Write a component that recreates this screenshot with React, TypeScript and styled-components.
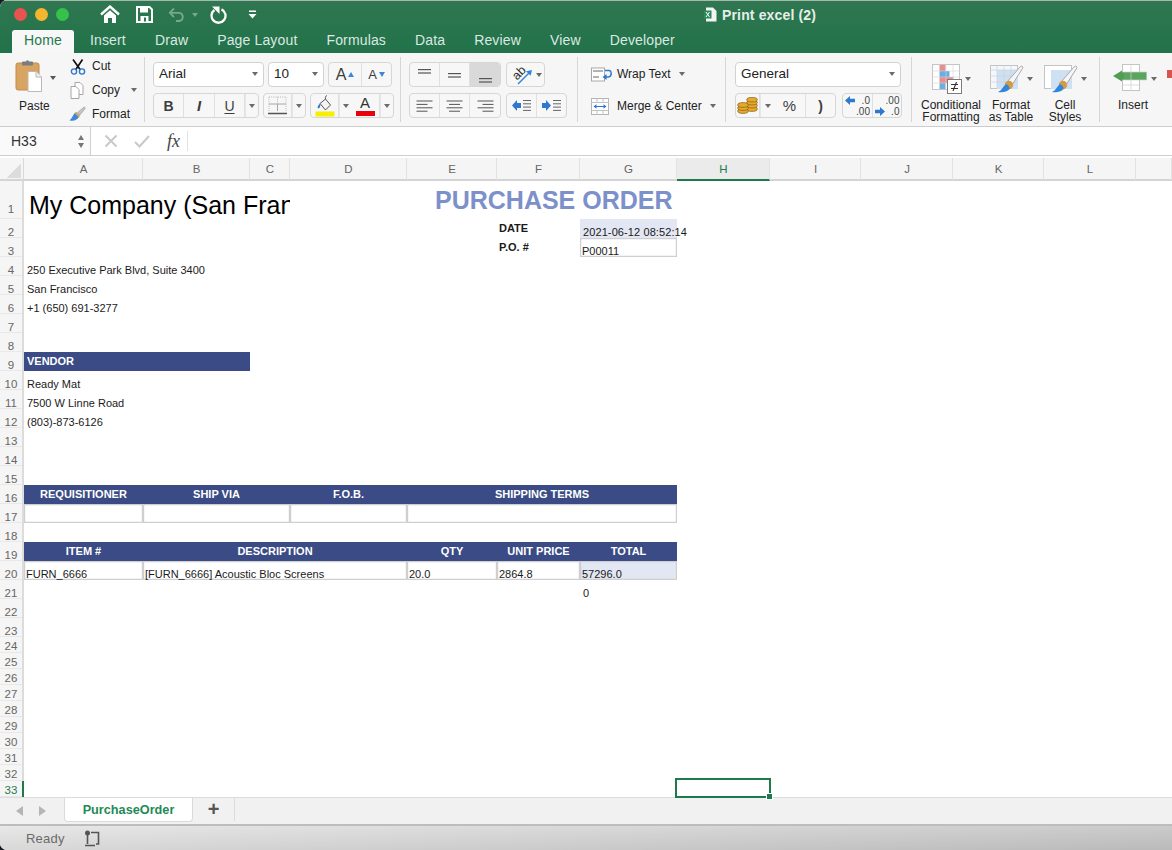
import React from "react";
import styled, { createGlobalStyle } from "styled-components";

const GlobalStyle = createGlobalStyle`
  html, body {
    margin: 0;
    width: 1172px;
    height: 850px;
    overflow: hidden;
    background: #141a22;
  }
  body {
    font-family: "Liberation Sans", Arial, sans-serif;
    color: #222;
  }
`;

const Window = styled.div`
  width: 1172px;
  height: 850px;
  display: flex;
  flex-direction: column;
  overflow: hidden;
  border-radius: 7px 0 0 7px;
  background: #fff;
`;

// TITLE
const Header = styled.header`
  height: 53px;
  flex: none;
  box-sizing: border-box;
  border-top: 1px solid #a9b8ae;
  background: linear-gradient(#2f7750, #21724a);
`;
const TitleRow = styled.div`
  height: 27px;
  display: flex;
  align-items: center;
  padding-left: 14px;
`;
const Light = styled.span<{ $color: string }>`
  width: 13px;
  height: 13px;
  margin-right: 8px;
  border-radius: 50%;
  background: ${(p) => p.$color};
`;
const Qat = styled.div`
  display: flex;
  align-items: center;
  margin-left: 23px;
`;
const QatSlot = styled.span<{ $gap: number }>`
  display: flex;
  margin-right: ${(p) => p.$gap}px;
`;
const Title = styled.div`
  display: flex;
  align-items: center;
  gap: 5px;
  margin-left: 447px;
  color: #e6eee9;
  font-size: 14px;
  font-weight: 700;
  letter-spacing: 0.15px;
`;
const TabRow = styled.nav`
  height: 25px;
  display: flex;
  align-items: flex-end;
  padding-left: 12px;
`;
const Tab = styled.div<{ $active?: boolean }>`
  height: 23px;
  box-sizing: border-box;
  display: flex;
  align-items: center;
  padding: 0 ${(p) => (p.$active ? 12 : 14.5)}px 4px;
  margin-right: ${(p) => (p.$active ? 1.5 : 0)}px;
  border-radius: 3px 3px 0 0;
  font-size: 14px;
  letter-spacing: 0.15px;
  color: ${(p) => (p.$active ? "#1f7a4d" : "#dce8e1")};
  background: ${(p) => (p.$active ? "#f7f7f7" : "transparent")};
`;

// RIBBON
const Ribbon = styled.section`
  height: 74px;
  flex: none;
  box-sizing: border-box;
  display: flex;
  overflow: hidden;
  background: #f6f6f6;
  border-bottom: 1px solid #cdcdcd;
`;
const Group = styled.div<{ $w: number; $pad?: number; $last?: boolean }>`
  width: ${(p) => p.$w}px;
  flex: none;
  box-sizing: border-box;
  padding: 9px 0 0 ${(p) => p.$pad ?? 8}px;
  position: relative;
  &::after {
    content: "";
    display: ${(p) => (p.$last ? "none" : "block")};
    position: absolute;
    right: 0;
    top: 4px;
    bottom: 4px;
    width: 1px;
    background: #d6d6d6;
  }
`;
const Stack = styled.div`
  display: flex;
  flex-direction: column;
  gap: 6px;
`;
const Row = styled.div<{ $gap?: number }>`
  display: flex;
  gap: ${(p) => p.$gap ?? 5}px;
`;
const Select = styled.div<{ $w: number }>`
  width: ${(p) => p.$w}px;
  height: 25px;
  box-sizing: border-box;
  display: flex;
  align-items: center;
  justify-content: space-between;
  padding: 0 5px 2px 5px;
  background: #fff;
  border: 1px solid #d2d2d2;
  border-radius: 4px;
  font-size: 13.5px;
`;
const ButtonGroup = styled.div`
  height: 25px;
  box-sizing: border-box;
  display: flex;
  border: 1px solid #d6d6d6;
  border-radius: 4px;
  background: #f7f7f7;
  overflow: hidden;
`;
const GroupButton = styled.div<{ $w: number; $active?: boolean }>`
  width: ${(p) => p.$w}px;
  flex: none;
  display: flex;
  align-items: center;
  justify-content: center;
  gap: 2px;
  box-sizing: border-box;
  border-right: 1px solid #e0e0e0;
  background: ${(p) => (p.$active ? "#d9d9d9" : "transparent")};
  &:last-child {
    border-right: none;
  }
`;
const Glyph = styled.span<{ $size?: number; $weight?: number; $italic?: boolean }>`
  font-size: ${(p) => p.$size ?? 14}px;
  font-weight: ${(p) => p.$weight ?? 400};
  font-style: ${(p) => (p.$italic ? "italic" : "normal")};
  color: #3d3d3d;
  line-height: 1;
`;
const Underlined = styled(Glyph)`
  text-decoration: underline;
  text-underline-offset: 2px;
`;
const ColorLetter = styled.span<{ $color: string }>`
  display: flex;
  flex-direction: column;
  align-items: center;
  font-size: 15px;
  line-height: 14px;
  color: #333;
  &::after {
    content: "";
    width: 19px;
    height: 5px;
    margin-top: 1px;
    background: ${(p) => p.$color};
  }
`;
const Caret = styled.i<{ $dark?: boolean; $tint?: string }>`
  display: inline-block;
  flex: none;
  width: 0;
  height: 0;
  border-left: 3px solid transparent;
  border-right: 3px solid transparent;
  border-top: 4px solid ${(p) => p.$tint ?? (p.$dark ? "#555" : "#6b6b6b")};
`;
const CopyCaret = styled(Caret)`
  margin-left: 5px;
`;
const CaretCell = styled.div<{ $w: number }>`
  width: ${(p) => p.$w}px;
  flex: none;
  display: flex;
  align-items: center;
  justify-content: center;
  border-left: 1px solid #e6e6e6;
`;
const ClipLayout = styled.div`
  display: flex;
  margin-top: -9px;
`;
const PasteButton = styled.div`
  width: 60px;
  flex: none;
  height: 73px;
  position: relative;
  padding: 7px 0 0 15px;
  box-sizing: border-box;
`;
const PasteLabel = styled.span`
  position: absolute;
  left: 19px;
  top: 46px;
  font-size: 12px;
`;
const PasteCaret = styled(Caret)`
  position: absolute;
  left: 50px;
  top: 23px;
`;
const ClipColumn = styled.div`
  display: flex;
  flex-direction: column;
  padding-top: 1px;
  margin-left: 9px;
`;
const ClipRow = styled.div`
  height: 24px;
  display: flex;
  align-items: center;
  gap: 6px;
  font-size: 12px;
`;
const ClipIcon = styled.span`
  width: 17px;
  display: flex;
  justify-content: center;
`;
const WrapColumn = styled.div`
  display: flex;
  flex-direction: column;
  gap: 10px;
  margin-top: 1px;
`;
const WrapRow = styled.div`
  height: 22px;
  display: flex;
  align-items: center;
  font-size: 12px;
`;
const WrapIcon = styled.span`
  width: 26px;
  flex: none;
  display: flex;
`;
const WrapCaret = styled(Caret)`
  margin-left: 8px;
`;
const LargeRow = styled.div`
  display: flex;
  margin-top: -9px;
`;
const LargeButton = styled.div<{ $w: number }>`
  width: ${(p) => p.$w}px;
  flex: none;
  height: 73px;
  box-sizing: border-box;
  padding-top: 10px;
  display: flex;
  flex-direction: column;
  align-items: center;
`;
const LargeIcon = styled.div`
  height: 32px;
  display: flex;
  align-items: center;
  gap: 3px;
  margin-left: 1px;
`;
const LargeLabel = styled.div`
  margin-top: 4px;
  text-align: center;
  font-size: 12px;
  line-height: 12px;
  white-space: nowrap;
`;
const DecimalCell = styled.div`
  display: grid;
  grid-template-columns: auto auto;
  align-items: center;
  column-gap: 1px;
  font-size: 10px;
  line-height: 11px;
  color: #444;
  justify-items: end;
`;
const RedStub = styled.span`
  position: absolute;
  left: 67px;
  top: 17px;
  width: 6px;
  height: 8px;
  background: #d9534f;
`;

// FORMULA BAR
const FormulaBar = styled.section`
  height: 29px;
  flex: none;
  box-sizing: border-box;
  display: flex;
  align-items: center;
  background: #fff;
  border-bottom: 1px solid #cfcfcf;
`;
const NameBox = styled.div`
  width: 91px;
  height: 28px;
  box-sizing: border-box;
  display: flex;
  align-items: center;
  justify-content: space-between;
  padding: 0 6px 0 11px;
  font-size: 14px;
  color: #333;
  background: #fafafa;
  border-right: 1px solid #cfcfcf;
`;
const Spinner = styled.div`
  display: flex;
  flex-direction: column;
  gap: 3px;
`;
const SpinUp = styled.i<{ $tint?: string }>`
  width: 0;
  height: 0;
  border-left: 3.5px solid transparent;
  border-right: 3.5px solid transparent;
  border-bottom: 5px solid ${(p) => p.$tint ?? "#777"};
`;
const SpinDown = styled.i<{ $tint?: string }>`
  width: 0;
  height: 0;
  border-left: 3.5px solid transparent;
  border-right: 3.5px solid transparent;
  border-top: 5px solid ${(p) => p.$tint ?? "#777"};
`;
const FormulaTools = styled.div`
  display: flex;
  align-items: center;
  gap: 16px;
  margin-left: 13px;
`;
const Fx = styled.span`
  padding: 0 7px 0 1px;
  font-family: "Liberation Serif", serif;
  font-style: italic;
  font-size: 18px;
  line-height: 20px;
  color: #444;
  border-right: 1px solid #e2e2e2;
`;

// SHEET
const Sheet = styled.main`
  flex: none;
  margin-top: 2px;
  display: grid;
  grid-template-columns: 24px 119px 107px 40px 117px 90px 83px 97px 93px 91px 92px 91px 92px 36px;
  grid-template-rows: 23px 38px repeat(22, 19px) repeat(10, 16px);
  background: #fff;
  font-size: 11px;
  color: #1a1a1a;
  position: relative;
  height: 639px;
`;
const Corner = styled.div`
  grid-column: 1;
  grid-row: 1;
  background: #f5f5f5;
  border-right: 1px solid #d8d8d8;
  border-bottom: 2px solid #d4d4d4;
  &::after {
    content: "";
    display: block;
    width: 15px;
    height: 15px;
    margin: 5px 0 0 6px;
    background: linear-gradient(135deg, transparent 50%, #dcdcdc 50%);
  }
`;
const ColHead = styled.div<{ $col: number; $active?: boolean }>`
  grid-column: ${(p) => p.$col};
  grid-row: 1;
  display: flex;
  align-items: center;
  justify-content: center;
  padding-left: 1px;
  font-size: 11.5px;
  color: ${(p) => (p.$active ? "#1d7a4c" : "#666")};
  background: ${(p) => (p.$active ? "#ebebeb" : "#f5f5f5")};
  border-right: 1px solid #e2e2e2;
  border-bottom: 2px solid ${(p) => (p.$active ? "#1d7a4c" : "#d4d4d4")};
`;
const RowHead = styled.div<{ $row: number; $active?: boolean }>`
  grid-column: 1;
  grid-row: ${(p) => p.$row + 1};
  display: flex;
  align-items: flex-end;
  justify-content: center;
  padding-bottom: ${(p) => (p.$row === 1 ? 4 : p.$row > 23 ? 1 : 0)}px;
  line-height: 11px;
  font-size: 11.5px;
  color: ${(p) => (p.$active ? "#1d7a4c" : "#666")};
  background: #f5f5f5;
  box-sizing: border-box;
  border-right: ${(p) => (p.$active ? "2px solid #1d7a4c" : "2px solid #dcdcdc")};
  box-shadow: inset 0 -1px 0 #e8e8e8;
`;
const Cell = styled.div<{
  $col: number;
  $row: number;
  $span?: number;
  $fill?: string;
  $border?: boolean;
  $align?: "left" | "center";
  $mid?: boolean;
  $bold?: boolean;
  $light?: boolean;
  $pad?: number;
  $clip?: boolean;
}>`
  grid-column: ${(p) => p.$col} / span ${(p) => p.$span ?? 1};
  grid-row: ${(p) => p.$row + 1};
  box-sizing: border-box;
  display: flex;
  align-items: ${(p) => (p.$mid ? "center" : "flex-end")};
  justify-content: ${(p) => (p.$align === "center" ? "center" : "flex-start")};
  padding-left: ${(p) => p.$pad ?? 2}px;
  padding-bottom: ${(p) => (p.$mid ? 2 : 0)}px;
  white-space: nowrap;
  min-width: 0;
  line-height: 12px;
  overflow: ${(p) => (p.$clip ? "hidden" : "visible")};
  font-weight: ${(p) => (p.$bold ? 700 : 400)};
  color: ${(p) => (p.$light ? "#fff" : "#1a1a1a")};
  background: ${(p) => p.$fill ?? "transparent"};
  box-shadow: ${(p) => (p.$border ? "inset 0 0 0 1.2px #cfcfcf" : "none")};
`;
const CompanyName = styled.span`
  font-size: 25px;
  line-height: 30px;
  color: #000;
  margin: 0 0 -1px 5px;
`;
const DocTitle = styled.span`
  font-size: 25px;
  line-height: 30px;
  font-weight: 700;
  color: #7c90c9;
  margin: 0 0 4px 0;
`;
const DateText = styled.span`
  letter-spacing: 0.1px;
`;
const Selection = styled.div`
  grid-column: 9;
  grid-row: 34;
  position: relative;
  &::before {
    content: "";
    position: absolute;
    left: -2px;
    right: -1px;
    top: -3px;
    bottom: -1px;
    border: 2px solid #1d7a4c;
  }
  &::after {
    content: "";
    position: absolute;
    right: -3px;
    bottom: -3px;
    width: 5px;
    height: 5px;
    background: #1d7a4c;
    border: 1px solid #fff;
  }
`;

// BOTTOM
const SheetBar = styled.div`
  height: 29px;
  flex: none;
  box-sizing: border-box;
  display: flex;
  background: #f1f1f1;
  border-top: 1px solid #dcdcdc;
  border-bottom: 2px solid #bdbdbd;
`;
const SheetNav = styled.div`
  width: 64px;
  display: flex;
  align-items: center;
  justify-content: center;
  gap: 16px;
  padding-right: 3px;
  box-sizing: border-box;
`;
const NavArrow = styled.i<{ $right?: boolean }>`
  width: 0;
  height: 0;
  border-top: 5px solid transparent;
  border-bottom: 5px solid transparent;
  border-${(p) => (p.$right ? "left" : "right")}: 7px solid #b5b5b5;
`;
const SheetTab = styled.div`
  width: 129px;
  height: 24px;
  box-sizing: border-box;
  display: flex;
  align-items: center;
  justify-content: center;
  background: #fff;
  border: 1px solid #dadada;
  border-top: none;
  border-radius: 0 0 4px 4px;
  color: #1f8a55;
  font-size: 12.7px;
  font-weight: 700;
`;
const AddSheet = styled.div`
  width: 41px;
  height: 23px;
  display: flex;
  align-items: center;
  justify-content: center;
  font-size: 20px;
  font-weight: 700;
  color: #555;
  border-right: 1px solid #dcdcdc;
`;
const StatusBar = styled.footer`
  flex: 1;
  display: flex;
  align-items: center;
  gap: 19px;
  padding-left: 26px;
  font-size: 13px;
  letter-spacing: 0.2px;
  color: #6a6a6a;
  background: linear-gradient(rgba(255, 255, 255, 0.12), rgba(0, 0, 0, 0.05)),
    linear-gradient(90deg, #e4e4e4, #c4c4c4);
`;

// ICONS
const HomeIcon = () => (
  <svg width="20" height="19" viewBox="0 0 20 19">
    <path d="M1 9.5 10 1.5l9 8" fill="none" stroke="#fff" strokeWidth="2.4" />
    <path d="M4 10.5 10 5.2l6 5.3V18h-4v-5H8v5H4z" fill="#fff" />
  </svg>
);
const Save = () => (
  <svg width="17" height="17" viewBox="0 0 17 17">
    <path d="M1 1h12.5L16 3.5V16H1z" fill="none" stroke="#fff" strokeWidth="2" />
    <rect x="4" y="2" width="8" height="4.5" fill="#fff" />
    <rect x="4.5" y="10" width="8" height="6" fill="#fff" />
    <rect x="8" y="11.5" width="2" height="4" fill="#2c7750" />
  </svg>
);
const Undo = () => (
  <svg width="18" height="15" viewBox="0 0 18 15">
    <path d="M6 1.5 1.8 5.8 6 10" fill="none" stroke="#79a78e" strokeWidth="1.8" />
    <path d="M2 5.8h9.5a4.2 4.2 0 0 1 0 8.2H8" fill="none" stroke="#79a78e" strokeWidth="1.8" />
  </svg>
);
const Redo = () => (
  <svg width="18" height="18" viewBox="0 0 18 18">
    <path d="M11.5 3.4a7 7 0 1 1-7 .6" fill="none" stroke="#fff" strokeWidth="2.3" />
    <path d="M2 .5h7.5V8z" fill="#fff" />
  </svg>
);
const Customize = () => (
  <svg width="9" height="9" viewBox="0 0 9 9">
    <rect x="1" y="0.5" width="7" height="1.5" fill="#fff" />
    <path d="M0.5 4h8L4.5 8.5z" fill="#fff" />
  </svg>
);
const ExcelDoc = () => (
  <svg width="13" height="15" viewBox="0 0 13 15">
    <path d="M2 .5h7l3.5 3.5v10.5H2z" fill="#f3f5f3" />
    <rect x="0" y="3.5" width="7.5" height="8" fill="#2a8a58" />
    <path d="m2 5 3.5 5M5.5 5 2 10" stroke="#fff" strokeWidth="1" />
  </svg>
);
const PasteIcon = () => (
  <svg width="28" height="32" viewBox="0 0 28 32">
    <rect x="1" y="3" width="23" height="27" rx="2" fill="#d9a362" stroke="#c28b4c" />
    <rect x="7" y="1.5" width="11" height="4" rx="1" fill="#7c7c7c" />
    <circle cx="12.5" cy="1.8" r="1.6" fill="#7c7c7c" />
    <path d="M13 11.5h8l5.5 5.5v14.5H13z" fill="#fff" stroke="#b9b9b9" />
    <path d="M21 11.5V17h5.5" fill="#eee" stroke="#b9b9b9" />
  </svg>
);
const Scissors = () => (
  <svg width="16" height="17" viewBox="0 0 16 17">
    <path d="M3 1.5 10.5 12M12.5 1.5 5.5 12" stroke="#111" strokeWidth="1.7" fill="none" />
    <circle cx="4" cy="13.5" r="2.6" fill="none" stroke="#2f78c8" strokeWidth="1.4" />
    <circle cx="12" cy="13.5" r="2.6" fill="none" stroke="#2f78c8" strokeWidth="1.4" />
  </svg>
);
const CopyIcon = () => (
  <svg width="15" height="17" viewBox="0 0 15 17">
    <path d="M5 .5h5l3 3v9H5z" fill="#fff" stroke="#a6a6a6" />
    <path d="M1 4.5h5l3 3v9H1z" fill="#fff" stroke="#a6a6a6" />
  </svg>
);
const Painter = () => (
  <svg width="18" height="17" viewBox="0 0 18 17">
    <path d="M9 6.5 15.5 1c1.2-.6 2 .3 1.5 1.3L11.5 9z" fill="#c7c7c7" stroke="#8c8c8c" strokeWidth=".6" />
    <path d="M7.5 5.5 12 10l-1.5 1.5L6 7z" fill="#d0a060" />
    <path d="M6 7l4.5 4.5C8 15 4 16 .5 14.5 3 13.5 3.5 10 6 7z" fill="#3f87d6" />
  </svg>
);
const BordersIcon = () => (
  <svg width="19" height="19" viewBox="0 0 19 19">
    <path d="M1 1h17M1 1v14M18 1v14M9.5 1v14" stroke="#b7b7b7" strokeWidth="1" strokeDasharray="1 1.2" fill="none" />
    <path d="M1 8h17" stroke="#a8a8a8" strokeWidth="1" />
    <path d="M9.5 8v7" stroke="#a8a8a8" strokeWidth="1" />
    <path d="M0 17.5h19" stroke="#555" strokeWidth="1.4" />
  </svg>
);
const FillIcon = () => (
  <svg width="20" height="22" viewBox="0 0 20 22">
    <path d="M5 8.5 10.5 4l5 6-5 5z" fill="#f4f4f4" stroke="#555" strokeWidth="1" />
    <path d="M10.5 4c-.5-2 .3-3.4 1.5-3.3" fill="none" stroke="#555" />
    <path d="M5 8.5c-2 2-3 3.5-2 5 1 0 2.2-1 2.3-3z" fill="#2f78c8" />
    <rect x="0.5" y="16.5" width="19" height="5" fill="#f6f000" />
  </svg>
);
const Lines = ({ kind }: { kind: "left" | "center" | "right" }) => {
  const spans = [16, 11, 16, 11];
  return (
    <svg width="17" height="12" viewBox="0 0 17 12">
      {spans.map((w, i) => {
        const x = kind === "left" ? 0.5 : kind === "right" ? 16.5 - w : 8.5 - w / 2;
        return <rect key={i} x={x} y={0.5 + i * 3.4} width={w} height="1" fill="#555" />;
      })}
    </svg>
  );
};
const Valign = ({ y }: { y: number }) => (
  <svg width="17" height="20" viewBox="0 0 17 20">
    <rect x="2" y={y} width="13" height="1.2" fill="#555" />
    <rect x="2" y={y + 3.4} width="13" height="1.2" fill="#555" />
  </svg>
);
const Orientation = () => (
  <svg width="24" height="22" viewBox="0 0 24 22">
    <path d="M8 20 19 9" stroke="#2f86dd" strokeWidth="1.4" />
    <path d="M22 6l-6 1.2 4.6 4.6z" fill="#2f86dd" />
    <g transform="rotate(-45 9 9)">
      <text x="2" y="13" fontSize="12.5" fontFamily="Liberation Sans" fill="#333">ab</text>
    </g>
  </svg>
);
const Indent = ({ flip }: { flip?: boolean }) => (
  <svg width="20" height="13" viewBox="0 0 20 13">
    <path d={flip ? "M0 4h4V1l5 5.5L4 12V9H0z" : "M9 4H5V1L0 6.5 5 12V9h4z"} fill="#2f78d0" />
    <path d="M11 1.5h8M11 4.8h8M11 8.1h8M11 11.4h8" stroke="#666" strokeWidth="1" />
  </svg>
);
const WrapIconSvg = () => (
  <svg width="22" height="15" viewBox="0 0 22 15">
    <rect x="0.5" y="1" width="13" height="13" fill="#fff" stroke="#a8a8a8" />
    <path d="M2 4h10M2 10h6" stroke="#666" />
    <path d="M14 3.5h4c3 0 3 6-.5 6.5H13" fill="none" stroke="#2f78d0" strokeWidth="1.5" />
    <path d="M15.5 7v6l-4-3z" fill="#2f78d0" />
  </svg>
);
const MergeIcon = () => (
  <svg width="18" height="17" viewBox="0 0 18 17">
    <rect x="0.5" y="0.5" width="17" height="16" fill="#fff" stroke="#b5b5b5" />
    <path d="M0 4.5h18M0 12.5h18M6 0v4M12 0v4M6 13v4M12 13v4" stroke="#c2c2c2" />
    <path d="M3 8.5h12" stroke="#2f78d0" />
    <path d="M5.5 6.3v4.4L2.5 8.5zM12.5 6.3v4.4l3-2.2z" fill="#2f78d0" />
  </svg>
);
const Coins = () => (
  <svg width="21" height="17" viewBox="0 0 21 17">
    <g fill="#e5a92f" stroke="#8a6212" strokeWidth=".7">
      <ellipse cx="15" cy="12" rx="5.3" ry="2.4" />
      <ellipse cx="15" cy="8.5" rx="5.3" ry="2.4" />
      <ellipse cx="15" cy="5.5" rx="5.3" ry="2.4" />
      <ellipse cx="15" cy="2.7" rx="5.3" ry="2.3" />
      <ellipse cx="6" cy="14" rx="5.3" ry="2.4" />
      <ellipse cx="6" cy="11" rx="5.3" ry="2.4" />
      <ellipse cx="6" cy="8" rx="5.3" ry="2.4" />
    </g>
  </svg>
);
const DecimalArrow = ({ flip }: { flip?: boolean }) => (
  <svg width="10" height="9" viewBox="0 0 9 8">
    <path d={flip ? "M0 2.5h4.5V0L9 4 4.5 8V5.5H0z" : "M9 2.5H4.5V0L0 4l4.5 4V5.5H9z"} fill="#2f78d0" />
  </svg>
);
const ConditionalIcon = () => (
  <svg width="30" height="30" viewBox="0 0 30 30">
    <rect x="0.5" y="0.5" width="27" height="25" fill="#fff" stroke="#c4c4c4" />
    <rect x="7.5" y="1" width="6" height="6" fill="#e78f8f" />
    <rect x="7.5" y="7" width="10" height="6" fill="#6aaee6" />
    <rect x="7.5" y="13" width="14" height="6" fill="#e78f8f" />
    <rect x="7.5" y="19" width="6" height="6" fill="#6aaee6" />
    <path d="M7.5 0v26M14 0v26M21 0v26M0 7h28M0 13h28M0 19h28" stroke="#d4d4d4" strokeWidth=".6" />
    <rect x="15.5" y="15.5" width="14" height="14" fill="#fff" stroke="#7c7c7c" />
    <path d="M19 20.5h7M19 24.5h7M24.5 18l-3.5 9" stroke="#333" strokeWidth="1.1" />
  </svg>
);
const BrushTable = ({ lines }: { lines?: boolean }) => (
  <svg width="34" height="30" viewBox="0 0 34 30">
    <rect x="0.5" y="1.5" width="27" height="23" fill={lines ? "#f4f7fb" : "#fff"} stroke="#c4c4c4" />
    <rect x="7" y="6" width="21" height="19" fill="#cfe0f3" />
    {lines && <path d="M7 1v24M14 1v24M21 1v24M0 6h28M0 12h28M0 18h28" stroke="#c9d3dd" strokeWidth=".7" />}
    <path d="M17 18 30.5 2.5c1.4-1 3 .2 2.2 1.7L22 21z" fill="#f6f6f6" stroke="#a8a8a8" />
    <circle cx="19" cy="21" r="4.2" fill="#d39b45" />
    <path d="M16 20c3 1.5 4 4 3.5 5-2.5 3-7 3.8-11.5 3 4-1.5 4.5-5 8-8z" fill="#2f86dd" />
  </svg>
);
const InsertIcon = () => (
  <svg width="38" height="30" viewBox="0 0 38 30">
    <rect x="12.5" y="0.5" width="17" height="26" fill="#fff" stroke="#c4c4c4" />
    <rect x="12" y="8" width="25" height="8" fill="#5aa65e" />
    <path d="M12.5 8h24v8h-24M21 0v27M12.5 21h17" fill="none" stroke="#cfcfcf" strokeWidth=".7" />
    <path d="M12 6.5v11L3 12l9-5.5z" fill="#4f9e54" />
    <rect x="9" y="9.5" width="5" height="5" fill="#4f9e54" />
  </svg>
);
const Cross = () => (
  <svg width="14" height="14" viewBox="0 0 14 14">
    <path d="M1.5 1.5 12.5 12.5M12.5 1.5 1.5 12.5" stroke="#c9c9c9" strokeWidth="2" />
  </svg>
);
const Check = () => (
  <svg width="16" height="13" viewBox="0 0 16 13">
    <path d="M1 7l4.5 4.5L15 1" fill="none" stroke="#c9c9c9" strokeWidth="2" />
  </svg>
);
const MacroIcon = () => (
  <svg width="17" height="17" viewBox="0 0 17 17">
    <circle cx="3.5" cy="3" r="2.5" fill="#555" />
    <path d="M3.5 5v9M7 2.5h7.5V14H12M1 15.5h10" fill="none" stroke="#555" strokeWidth="1.6" />
  </svg>
);

// DATA
const columns = ["A", "B", "C", "D", "E", "F", "G", "H", "I", "J", "K", "L", ""];
const rowNumbers = Array.from({ length: 33 }, (_, i) => i + 1);
const tabs = ["Insert", "Draw", "Page Layout", "Formulas", "Data", "Review", "View", "Developer"];
const plainCells: [number, string][] = [
  [4, "250 Executive Park Blvd, Suite 3400"],
  [5, "San Francisco"],
  [6, "+1 (650) 691-3277"],
  [10, "Ready Mat"],
  [11, "7500 W Linne Road"],
  [12, "(803)-873-6126"],
];
const band = "#3a4b85";
const pale = "#e3e7f3";

export default function App() {
  return (
    <Window>
      <GlobalStyle />
      <Header>
        <TitleRow>
          <Light $color="#e9534f" />
          <Light $color="#f5b62f" />
          <Light $color="#35c24a" />
          <Qat>
            <QatSlot $gap={16}><HomeIcon /></QatSlot>
            <QatSlot $gap={15}><Save /></QatSlot>
            <QatSlot $gap={6}><Undo /></QatSlot>
            <QatSlot $gap={12}><Caret $tint="#79a78e" /></QatSlot>
            <QatSlot $gap={20}><Redo /></QatSlot>
            <QatSlot $gap={0}><Customize /></QatSlot>
          </Qat>
          <Title>
            <ExcelDoc />
            Print excel (2)
          </Title>
        </TitleRow>
        <TabRow>
          <Tab $active>Home</Tab>
          {tabs.map((t) => (
            <Tab key={t}>{t}</Tab>
          ))}
        </TabRow>
      </Header>

      <Ribbon>
        <Group $w={145} $pad={0}>
          <ClipLayout>
            <PasteButton>
              <PasteIcon />
              <PasteCaret $dark />
              <PasteLabel>Paste</PasteLabel>
            </PasteButton>
            <ClipColumn>
              <ClipRow>
                <ClipIcon><Scissors /></ClipIcon>
                Cut
              </ClipRow>
              <ClipRow>
                <ClipIcon><CopyIcon /></ClipIcon>
                Copy
                <CopyCaret />
              </ClipRow>
              <ClipRow>
                <ClipIcon><Painter /></ClipIcon>
                Format
              </ClipRow>
            </ClipColumn>
          </ClipLayout>
        </Group>

        <Group $w={256}>
          <Stack>
            <Row $gap={4}>
              <Select $w={111}>
                Arial
                <Caret />
              </Select>
              <Select $w={56}>
                10
                <Caret />
              </Select>
              <ButtonGroup>
                <GroupButton $w={33}>
                  <Glyph $size={16}>A</Glyph>
                  <SpinUp $tint="#3d86d8" />
                </GroupButton>
                <GroupButton $w={29}>
                  <Glyph $size={13}>A</Glyph>
                  <SpinDown $tint="#3d86d8" />
                </GroupButton>
              </ButtonGroup>
            </Row>
            <Row $gap={4}>
              <ButtonGroup>
                <GroupButton $w={30}><Glyph $weight={700}>B</Glyph></GroupButton>
                <GroupButton $w={31}><Glyph $italic $weight={700} $size={15}>I</Glyph></GroupButton>
                <GroupButton $w={30}><Underlined>U</Underlined></GroupButton>
                <CaretCell $w={12}><Caret /></CaretCell>
              </ButtonGroup>
              <ButtonGroup>
                <GroupButton $w={28}><BordersIcon /></GroupButton>
                <CaretCell $w={12}><Caret /></CaretCell>
              </ButtonGroup>
              <ButtonGroup>
                <GroupButton $w={28}><FillIcon /></GroupButton>
                <CaretCell $w={11}><Caret /></CaretCell>
                <GroupButton $w={29}><ColorLetter $color="#e8000b">A</ColorLetter></GroupButton>
                <CaretCell $w={12}><Caret /></CaretCell>
              </ButtonGroup>
            </Row>
          </Stack>
        </Group>

        <Group $w={177}>
          <Stack>
            <Row>
              <ButtonGroup>
                <GroupButton $w={30}><Valign y={4} /></GroupButton>
                <GroupButton $w={30}><Valign y={8} /></GroupButton>
                <GroupButton $w={30} $active><Valign y={13} /></GroupButton>
              </ButtonGroup>
              <ButtonGroup>
                <GroupButton $w={37}>
                  <Orientation />
                  <Caret />
                </GroupButton>
              </ButtonGroup>
            </Row>
            <Row>
              <ButtonGroup>
                <GroupButton $w={30}><Lines kind="left" /></GroupButton>
                <GroupButton $w={30}><Lines kind="center" /></GroupButton>
                <GroupButton $w={30}><Lines kind="right" /></GroupButton>
              </ButtonGroup>
              <ButtonGroup>
                <GroupButton $w={30}><Indent /></GroupButton>
                <GroupButton $w={29}><Indent flip /></GroupButton>
              </ButtonGroup>
            </Row>
          </Stack>
        </Group>

        <Group $w={148} $pad={13}>
          <WrapColumn>
            <WrapRow>
              <WrapIcon><WrapIconSvg /></WrapIcon>
              Wrap Text
              <WrapCaret />
            </WrapRow>
            <WrapRow>
              <WrapIcon><MergeIcon /></WrapIcon>
              Merge &amp; Center
              <WrapCaret />
            </WrapRow>
          </WrapColumn>
        </Group>

        <Group $w={186} $pad={9}>
          <Stack>
            <Select $w={166}>
              General
              <Caret />
            </Select>
            <Row $gap={6}>
              <ButtonGroup>
                <GroupButton $w={24}><Coins /></GroupButton>
                <CaretCell $w={13}><Caret /></CaretCell>
                <GroupButton $w={32}><Glyph $size={15}>%</Glyph></GroupButton>
                <GroupButton $w={29}><Glyph $size={14} $weight={700}>)</Glyph></GroupButton>
              </ButtonGroup>
              <ButtonGroup>
                <GroupButton $w={30}>
                  <DecimalCell>
                    <DecimalArrow />
                    <span>.0</span>
                    <span />
                    <span>.00</span>
                  </DecimalCell>
                </GroupButton>
                <GroupButton $w={28}>
                  <DecimalCell>
                    <span />
                    <span>.00</span>
                    <DecimalArrow flip />
                    <span>.0</span>
                  </DecimalCell>
                </GroupButton>
              </ButtonGroup>
            </Row>
          </Stack>
        </Group>

        <Group $w={188} $pad={9}>
          <LargeRow>
            <LargeButton $w={60}>
              <LargeIcon><ConditionalIcon /><Caret /></LargeIcon>
              <LargeLabel>Conditional<br />Formatting</LargeLabel>
            </LargeButton>
            <LargeButton $w={60}>
              <LargeIcon><BrushTable lines /><Caret /></LargeIcon>
              <LargeLabel>Format<br />as Table</LargeLabel>
            </LargeButton>
            <LargeButton $w={48}>
              <LargeIcon><BrushTable /><Caret /></LargeIcon>
              <LargeLabel>Cell<br />Styles</LargeLabel>
            </LargeButton>
          </LargeRow>
        </Group>

        <Group $w={72} $pad={0} $last>
          <LargeRow>
            <LargeButton $w={66}>
              <LargeIcon><InsertIcon /><Caret /></LargeIcon>
              <LargeLabel>Insert</LargeLabel>
            </LargeButton>
          </LargeRow>
          <RedStub />
        </Group>
      </Ribbon>

      <FormulaBar>
        <NameBox>
          H33
          <Spinner>
            <SpinUp />
            <SpinDown />
          </Spinner>
        </NameBox>
        <FormulaTools>
          <Cross />
          <Check />
          <Fx>fx</Fx>
        </FormulaTools>
      </FormulaBar>

      <Sheet>
        <Corner />
        {columns.map((c, i) => (
          <ColHead key={i} $col={i + 2} $active={c === "H"}>
            {c}
          </ColHead>
        ))}
        {rowNumbers.map((n) => (
          <RowHead key={n} $row={n} $active={n === 33}>
            {n}
          </RowHead>
        ))}

        <Cell $col={2} $row={1} $span={3} $clip $pad={0}>
          <CompanyName>My Company (San Francisco)</CompanyName>
        </Cell>
        <Cell $col={6} $row={1} $span={3} $pad={28}>
          <DocTitle>PURCHASE ORDER</DocTitle>
        </Cell>

        <Cell $col={7} $row={2} $bold $mid>DATE</Cell>
        <Cell $col={8} $row={2} $fill={pale} $pad={3}><DateText>2021-06-12 08:52:14</DateText></Cell>
        <Cell $col={7} $row={3} $bold $mid>P.O. #</Cell>
        <Cell $col={8} $row={3} $border>P00011</Cell>

        {plainCells.map(([row, text]) => (
          <Cell key={row} $col={2} $row={row} $span={2} $pad={3}>{text}</Cell>
        ))}

        <Cell $col={2} $row={9} $span={2} $fill={band} $light $bold $mid $pad={3}>VENDOR</Cell>

        <Cell $col={2} $row={16} $fill={band} $light $bold $mid $align="center" $pad={0}>REQUISITIONER</Cell>
        <Cell $col={3} $row={16} $span={2} $fill={band} $light $bold $mid $align="center" $pad={0}>SHIP VIA</Cell>
        <Cell $col={5} $row={16} $fill={band} $light $bold $mid $align="center" $pad={0}>F.O.B.</Cell>
        <Cell $col={6} $row={16} $span={3} $fill={band} $light $bold $mid $align="center" $pad={0}>SHIPPING TERMS</Cell>

        <Cell $col={2} $row={17} $border />
        <Cell $col={3} $row={17} $span={2} $border />
        <Cell $col={5} $row={17} $border />
        <Cell $col={6} $row={17} $span={3} $border />

        <Cell $col={2} $row={19} $fill={band} $light $bold $mid $align="center" $pad={0}>ITEM #</Cell>
        <Cell $col={3} $row={19} $span={3} $fill={band} $light $bold $mid $align="center" $pad={0}>DESCRIPTION</Cell>
        <Cell $col={6} $row={19} $fill={band} $light $bold $mid $align="center" $pad={0}>QTY</Cell>
        <Cell $col={7} $row={19} $fill={band} $light $bold $mid $align="center" $pad={0}>UNIT PRICE</Cell>
        <Cell $col={8} $row={19} $fill={band} $light $bold $mid $align="center" $pad={0}>TOTAL</Cell>

        <Cell $col={2} $row={20} $border>FURN_6666</Cell>
        <Cell $col={3} $row={20} $span={3} $border>[FURN_6666] Acoustic Bloc Screens</Cell>
        <Cell $col={6} $row={20} $border>20.0</Cell>
        <Cell $col={7} $row={20} $border>2864.8</Cell>
        <Cell $col={8} $row={20} $border $fill={pale}>57296.0</Cell>
        <Cell $col={8} $row={21} $pad={3}>0</Cell>

        <Selection />
      </Sheet>

      <SheetBar>
        <SheetNav>
          <NavArrow />
          <NavArrow $right />
        </SheetNav>
        <SheetTab>PurchaseOrder</SheetTab>
        <AddSheet>+</AddSheet>
      </SheetBar>
      <StatusBar>
        Ready
        <MacroIcon />
      </StatusBar>
    </Window>
  );
}
